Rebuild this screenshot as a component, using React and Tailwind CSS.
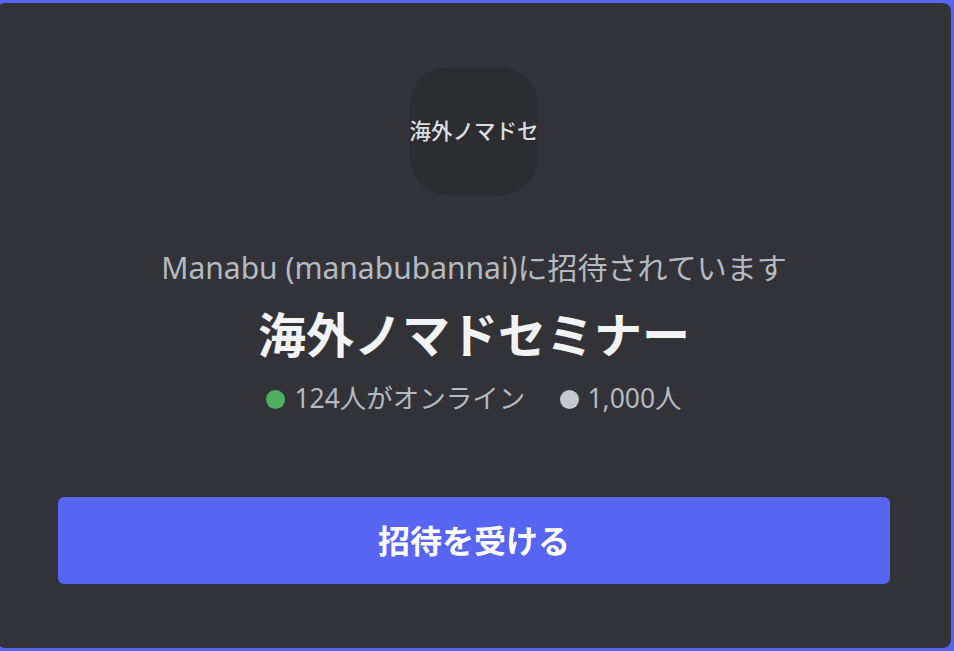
export default function App() {
  return (
    <div className="min-h-screen w-full overflow-hidden bg-[#5865f2] py-[3px] pr-[3px]" style={{ fontFamily: '"Noto Sans", "Noto Sans CJK JP", sans-serif' }}>
      <div className="ml-[-3px] h-[645px] rounded-lg bg-[#313338] px-[61px] pt-[64px] flex flex-col items-center">
        {/* server icon */}
        <div className="w-[128px] h-[128px] rounded-[38px] bg-[#2b2d31] flex items-center justify-center overflow-visible">
          <span className="whitespace-nowrap text-[21.5px] font-medium leading-none text-[#dbdee1]">海外ノマドセ</span>
        </div>

        <p className="mt-[53px] text-[30px] leading-[40px] text-[#b5bac1] whitespace-nowrap">
          Manabu (manabubannai)に招待されています
        </p>
        <h1 className="mt-[19px] text-[48px] leading-[56px] font-bold text-[#f2f3f5] whitespace-nowrap">
          海外ノマドセミナー
        </h1>

        <div className="mt-[20px] flex items-center h-[32px] text-[26.5px] text-[#b5bac1] whitespace-nowrap">
          <span className="w-[19px] h-[19px] rounded-full bg-[#4fae5f] mr-[9px]"></span>
          <span>124人がオンライン</span>
          <span className="w-[19px] h-[19px] rounded-full bg-[#c4c9ce] ml-[35px] mr-[8px]"></span>
          <span>1,000人</span>
        </div>

        <button className="mt-[82px] w-full h-[87px] rounded-md bg-[#5865f2] text-white text-[32px] font-semibold">
          招待を受ける
        </button>
      </div>
    </div>
  );
}
